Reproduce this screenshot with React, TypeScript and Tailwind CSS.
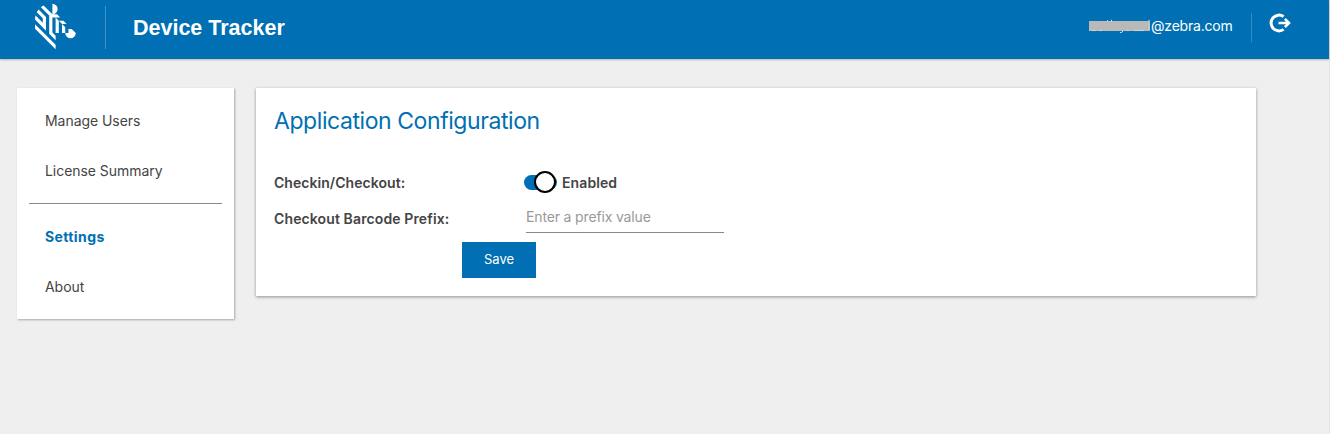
import { SiZebratechnologies } from "react-icons/si";

const navItem = "flex h-[50px] items-center pl-[28px] text-sm tracking-[-0.05px]";

function LogoutIcon() {
  return (
    <svg className="h-6 w-6" viewBox="0 0 24 24" fill="none" stroke="white">
      <path d="M14.6 5.6A7.9 7.9 0 1 0 14.6 18.4" strokeWidth="3" />
      <path d="M9.5 12H20M15.9 7.9L20 12L15.9 16.1" strokeWidth="2.6" />
    </svg>
  );
}

function MaskedName() {
  return (
    <svg className="mt-[19px] h-[16px] w-[61px]" viewBox="0 0 61 16" fill="none" stroke="white" strokeWidth="1">
      <rect x="0" y="2" width="61" height="10" fill="#b9b9b9" stroke="none" />
      <path d="M18.5 1.2V2.4M22.5 0.8V2.4M60 0.8V2.2M31 13.5Q33 14 34 12" strokeOpacity="0.8" />
      <path d="M3 11.6H7M10 11.6H13M37 11.6H40M45 11.6H55M60 4V11" strokeOpacity="0.35" />
    </svg>
  );
}

export default function App() {
  return (
    <div className="flex h-[434px] w-[1331px] bg-white font-['Inter',sans-serif] text-[#444444]">
      <div className="flex w-[1330px] flex-col border-r border-[#e2e2e2] bg-[#efefef]">
        <header className="flex h-[59px] shrink-0 bg-[#006fb3] text-white shadow-[0_1px_2px_rgba(0,0,0,0.25)]">
          <div className="mt-[2px] ml-[35px] flex h-[49px] w-[43px] items-center overflow-hidden">
            <SiZebratechnologies className="h-[141px] w-[141px] shrink-0" />
          </div>
          <div className="mt-[6px] ml-[27px] h-[43px] w-px bg-[#4094c8]" />
          <h1 className="mt-[12px] ml-[27px] font-['Liberation_Sans',sans-serif] text-[21.5px] leading-[32px] font-bold">
            Device Tracker
          </h1>
          <div className="ml-auto flex">
            <MaskedName />
            <span className="mt-[16px] ml-px w-[83px] text-sm leading-5 tracking-[-0.2px]">@zebra.com</span>
            <div className="mt-[13px] ml-[17px] h-[29px] w-px bg-[#338cc2]" />
            <button className="mt-[11px] mr-[36px] ml-[17px] h-6 w-6" aria-label="Log out">
              <LogoutIcon />
            </button>
          </div>
        </header>
        <main className="flex items-start pt-[29px] pl-[17px]">
          <nav className="h-[231px] w-[217px] bg-white pt-[8px] shadow-[1px_1px_2px_rgba(0,0,0,0.3)]">
            <a className={navItem}>Manage Users</a>
            <a className={navItem}>License Summary</a>
            <div className="mx-[12px] mt-[7px] mb-[8px] h-px bg-[#888888]" />
            <a className="flex h-[50px] items-center pl-[28px] text-sm font-bold tracking-[0.4px] text-[#006fb3]">Settings</a>
            <a className={navItem}>About</a>
          </nav>
          <section className="ml-[22px] h-[208px] w-[1000px] bg-white pl-[18px] shadow-[0_1px_3px_rgba(0,0,0,0.4)]">
            <h2 className="pt-[17px] text-[23px] leading-8 tracking-[-0.43px] text-[#006fb3]">Application Configuration</h2>
            <div className="mt-[28px] flex h-[36px] items-center text-sm font-semibold tracking-[0.1px]">
              <span className="w-[250px] tracking-[0.05px]">Checkin/Checkout:</span>
              <div className="mb-[2px] flex h-[15px] w-[33px] items-center justify-end rounded-full bg-[#006fb3] pr-px">
                <div className="h-[22px] w-[22px] shrink-0 rounded-full border-2 border-black bg-white" />
              </div>
              <span className="ml-[5px]">Enabled</span>
            </div>
            <div className="flex h-[36px] text-sm">
              <span className="w-[252px] pt-[8px] leading-5 font-semibold tracking-[0.12px]">Checkout Barcode Prefix:</span>
              <input
                className="h-[32px] w-[198px] border-b border-[#888888] pb-px tracking-[-0.15px] outline-none placeholder:text-[#999999]"
                placeholder="Enter a prefix value"
              />
            </div>
            <button className="mt-[5px] ml-[188px] block h-[36px] w-[74px] bg-[#006fb3] text-[13px] text-white">Save</button>
          </section>
        </main>
      </div>
    </div>
  );
}
